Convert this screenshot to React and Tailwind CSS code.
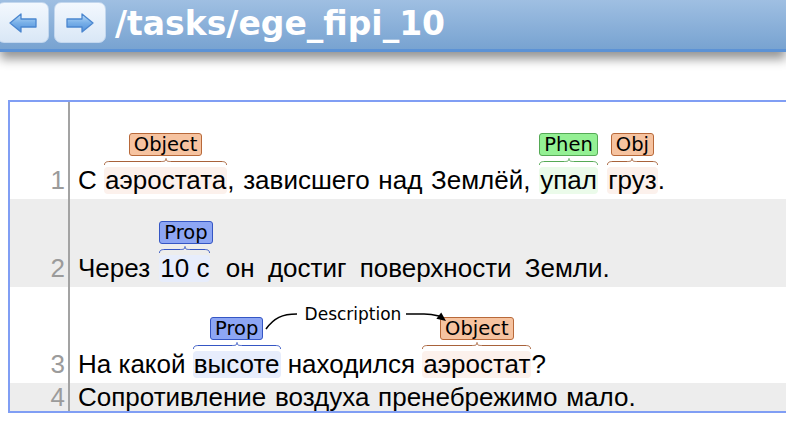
import React from 'react';

const TEXT_FONT = { fontFamily: '"Liberation Sans", Arial, sans-serif' };
const LABEL_FONT = { fontFamily: '"DejaVu Sans", Verdana, sans-serif' };

const kinds = {
  Object: { box: 'bg-[#f6c3a0] border-[#b8693a]', hl: 'bg-[#fcf1ec]', brace: '#a8623a' },
  Phen: { box: 'bg-[#94f094] border-[#55a955]', hl: 'bg-[#ebfbea]', brace: '#55a955' },
  Prop: { box: 'bg-[#8da6f4] border-[#3556c4]', hl: 'bg-[#e7edfc]', brace: '#3556c4' },
};

const Brace = ({ color }) => (
  <div className="flex h-[7px] w-full">
    <svg width="6" height="7" className="shrink-0">
      <path d="M0.5 7 C0.5 4.5 2 3.5 6 3.5" stroke={color} fill="none" strokeWidth="1" />
    </svg>
    <div className="flex-1 h-0 mt-[3px] border-t" style={{ borderColor: color }} />
    <svg width="12" height="7" className="shrink-0">
      <path d="M0 3.5 C4 3.5 6 3.5 6 0.5 C6 3.5 8 3.5 12 3.5" stroke={color} fill="none" strokeWidth="1" />
    </svg>
    <div className="flex-1 h-0 mt-[3px] border-t" style={{ borderColor: color }} />
    <svg width="6" height="7" className="shrink-0">
      <path d="M5.5 7 C5.5 4.5 4 3.5 0 3.5" stroke={color} fill="none" strokeWidth="1" />
    </svg>
  </div>
);

// annotated span: label box above, brace, highlighted word
const Span = ({ kind, label, children, start }) => {
  const k = kinds[kind];
  return (
    <span className={`inline-flex flex-col ${start ? 'items-start' : 'items-center'}`}>
      <span
        className={`${k.box} border rounded-[3px] px-[4px] h-[23px] leading-[21px] text-[19.5px] text-black`}
        style={LABEL_FONT}
      >
        {label || kind}
      </span>
      <span className="inline-flex flex-col mt-[2px]">
        <Brace color={k.brace} />
        <span className={`${k.hl} rounded-[4px] h-[27px] leading-[27px] mt-[2px] px-[1px]`}>{children}</span>
      </span>
    </span>
  );
};

const T = ({ children, className = '' }) => (
  <span className={`whitespace-pre h-[27px] leading-[27px] ${className}`}>{children}</span>
);

const Row = ({ n, gray, height, children, extra }) => (
  <div className={`relative flex ${height} ${gray ? 'bg-[#ededed]' : 'bg-white'}`}>
    <div className="w-[60px] shrink-0 flex items-end justify-end pr-[3px] pb-[5px] border-r-2 border-[#a3a3a3] text-[26px] leading-[27px] text-[#9b9b9b]">
      {n}
    </div>
    <div className="flex items-end pl-[8px] pb-[5px] text-[26px] text-black">{children}</div>
    {extra}
  </div>
);

const Arrow = ({ dir }) => (
  <svg width="32" height="24" viewBox="0 0 32 24" className={dir === 'right' ? '-scale-x-100' : ''}>
    <defs>
      <linearGradient id={`ag-${dir}`} x1="0" y1="0" x2="0" y2="1">
        <stop offset="0" stopColor="#bcdcf8" />
        <stop offset="0.5" stopColor="#77afe8" />
        <stop offset="1" stopColor="#5290d9" />
      </linearGradient>
    </defs>
    <path
      d="M3 12 L14 3 L14 8 L29 8 L29 16 L14 16 L14 21 Z"
      fill={`url(#ag-${dir})`}
      stroke="#4a86cf"
      strokeWidth="1.3"
      strokeLinejoin="round"
    />
  </svg>
);

const NavButton = ({ dir, className }) => (
  <div
    className={`w-[52px] h-[41px] mt-[2px] rounded-[7px] border border-[#c3d7ee] bg-gradient-to-b from-[#f3f8fe] to-[#d9e7f6] flex items-center justify-center ${className}`}
  >
    <Arrow dir={dir} />
  </div>
);

export default function App() {
  return (
    <div className="w-[786px] h-[444px] overflow-hidden bg-white" style={TEXT_FONT}>
      <div className="relative h-[52px] flex items-start bg-gradient-to-b from-[#9fbfe2] to-[#78a3d1] border-b-[3px] border-[#5c92d5] shadow-[0_7px_10px_rgba(0,0,0,0.42)]">
        <NavButton dir="left" className="-ml-[3px]" />
        <NavButton dir="right" className="ml-[5px]" />
        <div className="ml-[9px] mt-[5px] text-[33px] leading-[38px] font-bold text-white" style={LABEL_FONT}>
          /tasks/ege_fipi_10
        </div>
      </div>

      <div className="mt-[48px] ml-[8px] w-[800px] border-2 border-[#809ef4]">
        <Row n="1" height="h-[97px]">
          <T>С </T>
          <Span kind="Object">аэростата</Span>
          <T className="[word-spacing:1.5px]">, зависшего над Землёй, </T>
          <Span kind="Phen">упал</Span>
          <T className="[word-spacing:2px]"> </T>
          <Span kind="Object" label="Obj">груз</Span>
          <T>.</T>
        </Row>
        <Row n="2" gray height="h-[88px]">
          <T className="[word-spacing:2px]">Через </T>
          <Span kind="Prop" start>10 с</Span>
          <T className="[word-spacing:6px]"> он достиг поверхности Земли.</T>
        </Row>
        <Row
          n="3"
          height="h-[96px]"
          extra={
            <svg className="absolute left-0 top-0 pointer-events-none" width="600" height="96">
              <path d="M256 42 C264 31 272 27 287 27" stroke="#000" strokeWidth="1.6" fill="none" />
              <text x="343" y="27" textAnchor="middle" dominantBaseline="central" fontSize="17" style={LABEL_FONT}>
                Description
              </text>
              <path d="M396 27 L414 27 C421 27 425 28 429 29" stroke="#000" strokeWidth="1.6" fill="none" />
              <polygon points="436,34 426.4,31.8 431.2,25.4" fill="#000" />
            </svg>
          }
        >
          <T>На какой </T>
          <Span kind="Prop">высоте</Span>
          <T> находился </T>
          <Span kind="Object">аэростат</Span>
          <T>?</T>
        </Row>
        <div className="flex h-[28px] bg-[#ededed]">
          <div className="w-[60px] shrink-0 flex items-center justify-end pr-[3px] border-r-2 border-[#a3a3a3] text-[26px] leading-[27px] text-[#9b9b9b]">
            4
          </div>
          <div className="flex items-center pl-[8px] text-[26px] leading-[27px] text-black [word-spacing:1.5px]">
            Сопротивление воздуха пренебрежимо мало.
          </div>
        </div>
      </div>
    </div>
  );
}
